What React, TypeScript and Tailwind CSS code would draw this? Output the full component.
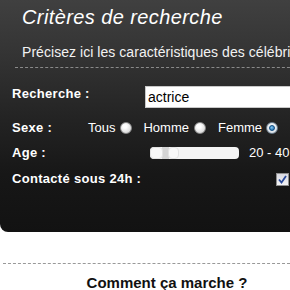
import React from "react";

function Radio({ checked }: { checked?: boolean }) {
  if (checked) {
    return (
      <span className="inline-block w-[12px] h-[12px] rounded-full border border-[#6b7b8a] bg-[radial-gradient(circle_at_50%_40%,#ffffff,#c9d4de)] relative">
        <span className="absolute left-[2px] top-[2px] w-[6px] h-[6px] rounded-full bg-[radial-gradient(circle_at_40%_35%,#7fc4f0,#1464a8)] border border-[#0e4a7e]" />
      </span>
    );
  }
  return (
    <span className="inline-block w-[12px] h-[12px] rounded-full border border-[#8a8a8a] bg-[radial-gradient(circle_at_40%_35%,#ffffff_20%,#cfcfcf_90%)]" />
  );
}

export default function App() {
  const font = { fontFamily: '"Liberation Sans", Arial, sans-serif' };
  return (
    <div className="w-[290px] h-[290px] overflow-hidden bg-white" style={font}>
      <div className="w-[300px] h-[232px] rounded-bl-[8px] bg-[linear-gradient(to_bottom,#404040_0%,#333333_25%,#242424_50%,#171717_75%,#121212_100%)] flex flex-col">
        <div className="pl-[22px] pt-[5px] text-[20px] leading-[24px] italic text-white tracking-[0.4px]">
          Critères de recherche
        </div>
        <div className="pl-[22px] mt-[15px] text-[14px] leading-[16px] text-[#f2f2f2] whitespace-nowrap tracking-[0.05px]">
          Précisez ici les caractéristiques des célébrités
        </div>
        <div className="ml-[15px] mt-[7px] border-t border-dashed border-[#8a8a8a]" />
        <div className="pl-[12px] flex flex-col text-white text-[13px]">
          <div className="mt-[18px] flex items-start h-[22px]">
            <span className="w-[133px] shrink-0 font-bold leading-[16px] tracking-[0.3px]">Recherche :</span>
            <div className="w-[200px] shrink-0 h-[22px] bg-white border border-[#c8c8c8] flex items-center pl-[2px] text-[14px] text-black">
              actrice
            </div>
          </div>
          <div className="mt-[12px] flex items-center h-[16px] leading-[16px]">
            <span className="w-[76px] shrink-0 font-bold tracking-[0.3px]">Sexe :</span>
            <span>Tous</span>
            <span className="ml-[5px] flex"><Radio /></span>
            <span className="ml-[11px]">Homme</span>
            <span className="ml-[5px] flex"><Radio /></span>
            <span className="ml-[12px]">Femme</span>
            <span className="ml-[4px] flex"><Radio checked /></span>
          </div>
          <div className="mt-[9px] flex items-center h-[16px] leading-[16px]">
            <span className="w-[138px] shrink-0 font-bold tracking-[0.3px]">Age :</span>
            <div className="relative w-[89px] shrink-0 h-[12px] rounded-[4px] bg-[#f4f4f4]">
              <span className="absolute left-[12px] top-0 w-[7px] h-[12px] bg-[#d4d4d4]" />
              <span className="absolute left-0 top-0 w-[13px] h-[12px] rounded-[4px] bg-[#f8f8f8] border border-[#e2e2e2]" />
              <span className="absolute left-[18px] top-0 w-[11px] h-[12px] rounded-[4px] bg-[#f8f8f8] border border-[#e2e2e2]" />
            </div>
            <span className="ml-[10px] whitespace-nowrap">20 - 40</span>
          </div>
          <div className="mt-[10px] flex items-center h-[16px] leading-[16px]">
            <span className="w-[264px] shrink-0 font-bold tracking-[0.3px]">Contacté sous 24h :</span>
            <span className="w-[13px] h-[13px] shrink-0 border border-[#8e8e8e] bg-[linear-gradient(to_bottom,#d8d8e0,#f4f4f6)] flex items-center justify-center">
              <svg width="9" height="9" viewBox="0 0 9 9">
                <path d="M1 4.5 L3.5 7.5 L8 1" fill="none" stroke="#2a4a9a" strokeWidth="1.8" />
              </svg>
            </span>
          </div>
        </div>
      </div>
      <div className="ml-[3px] mt-[31px] border-t border-dashed border-[#999999]" />
      <div className="mt-[10px] text-center pl-[44px] text-[15px] leading-[18px] font-bold text-[#111111]">
        Comment ça marche ?
      </div>
    </div>
  );
}
